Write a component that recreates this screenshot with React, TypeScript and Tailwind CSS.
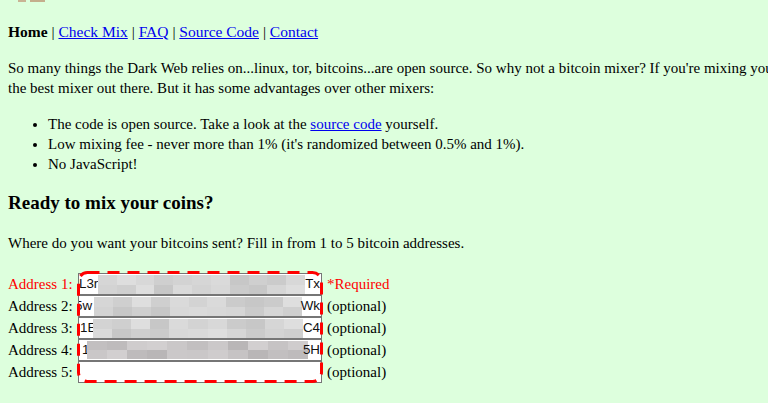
import React from "react";

const P = [
  "bg-[#d6d6d6]",
  "bg-[#cfcfcf]",
  "bg-[#dadada]",
  "bg-[#cbcbcb]",
  "bg-[#dedede]",
  "bg-[#d3d3d3]",
  "bg-[#c7c7c7]",
  "bg-[#d8d8d8]",
];
const D = [
  "bg-[#c6c3c4]",
  "bg-[#bebbbc]",
  "bg-[#cac7c8]",
  "bg-[#b9b6b7]",
  "bg-[#cfcccd]",
  "bg-[#c2bfc0]",
  "bg-[#d2cfd0]",
  "bg-[#cbc8c9]",
];

function Mosaic({ seed, dark, className }: { seed: number; dark?: boolean; className: string }) {
  const pal = dark ? D : P;
  const rows = [0, 1];
  const cols = Array.from({ length: 11 }, (_, i) => i);
  return (
    <div className={"flex flex-col " + className}>
      {rows.map((r) => (
        <div key={r} className="flex flex-1">
          {cols.map((c) => (
            <div key={c} className={"flex-1 " + pal[(c * 3 + r * 5 + seed * 7 + ((c * c + seed) % 3)) % 8]} />
          ))}
        </div>
      ))}
    </div>
  );
}

function Box({ children }: { children?: React.ReactNode }) {
  return (
    <div className="relative h-[22px] w-[244px] overflow-hidden border border-[#767676] bg-white font-['Liberation_Sans',Arial,sans-serif] text-[13.33px] leading-[20px] text-[#111]">
      {children}
    </div>
  );
}

export default function App() {
  return (
    <div className="min-h-[403px] overflow-hidden bg-[#ddffdd] px-2 font-['Liberation_Serif','Times_New_Roman',serif] text-[15px] leading-[20px] text-black">
      <div className="relative h-[22px]">
        <div className="absolute left-[10px] top-0 h-[2px] w-[8px] bg-[#c9b494]" />
        <div className="absolute left-[22px] top-0 h-[2px] w-[15px] bg-[#c4ae8c]" />
      </div>
      <div className="whitespace-nowrap text-[15.5px]">
        <b>Home</b> | <a className="text-[#0000ee] underline" href="#">Check Mix</a> |{" "}
        <a className="text-[#0000ee] underline" href="#">FAQ</a> |{" "}
        <a className="text-[#0000ee] underline" href="#">Source Code</a> |{" "}
        <a className="text-[#0000ee] underline" href="#">Contact</a>
      </div>
      <p className="mt-4 whitespace-nowrap">
        So many things the Dark Web relies on...linux, tor, bitcoins...are open source. So why not a bitcoin mixer? If you're mixing your
        <br />
        the best mixer out there. But it has some advantages over other mixers:
      </p>
      <ul className="mt-4 list-disc pl-10">
        <li>
          The code is open source. Take a look at the{" "}
          <a className="text-[#0000ee] underline" href="#">source code</a> yourself.
        </li>
        <li>Low mixing fee - never more than 1% (it's randomized between 0.5% and 1%).</li>
        <li>No JavaScript!</li>
      </ul>
      <h3 className="mt-[18px] text-[19px] font-bold leading-[22px]">Ready to mix your coins?</h3>
      <p className="mt-[19px]">Where do you want your bitcoins sent? Fill in from 1 to 5 bitcoin addresses.</p>
      <div className="mt-[20px] flex leading-[22px]">
        <div className="flex w-[70px] flex-col whitespace-nowrap">
          <div className="h-[22px] text-[#ff0000]">Address 1:</div>
          <div className="h-[22px]">Address 2:</div>
          <div className="h-[22px]">Address 3:</div>
          <div className="h-[22px]">Address 4:</div>
          <div className="h-[22px]">Address 5:</div>
        </div>
        <div className="relative flex flex-col">
          <Box>
            <span className="absolute left-[0px] top-0">L3r</span>
            <Mosaic seed={1} className="absolute left-[19px] top-[1px] h-[19px] w-[207px]" />
            <span className="absolute right-[1px] top-0">Tx</span>
          </Box>
          <Box>
            <span className="absolute left-[-4px] top-0">5w</span>
            <Mosaic seed={2} className="absolute left-[15px] top-[1px] h-[19px] w-[208px]" />
            <span className="absolute right-[1px] top-0">Wk</span>
          </Box>
          <Box>
            <span className="absolute left-[1px] top-0">1E</span>
            <Mosaic seed={3} className="absolute left-[14px] top-[1px] h-[19px] w-[210px]" />
            <span className="absolute right-[1px] top-0">C4</span>
          </Box>
          <Box>
            <span className="absolute left-[3px] top-0">1</span>
            <Mosaic seed={4} dark className="absolute left-[8px] top-[1px] h-[18px] w-[221px]" />
            <span className="absolute right-[1px] top-0">5H</span>
          </Box>
          <Box />
          <svg
            className="pointer-events-none absolute left-[-1px] top-[-2px] h-[112px] w-[246px]"
            viewBox="0 0 246 112"
            fill="none"
          >
            <rect x="1.5" y="1.5" width="243" height="109" rx="9" stroke="#ff0000" strokeWidth="3" strokeDasharray="12 8" />
          </svg>
        </div>
        <div className="ml-[5px] flex flex-col">
          <div className="h-[22px] text-[#ff0000]">*Required</div>
          <div className="h-[22px]">(optional)</div>
          <div className="h-[22px]">(optional)</div>
          <div className="h-[22px]">(optional)</div>
          <div className="h-[22px]">(optional)</div>
        </div>
      </div>
    </div>
  );
}
